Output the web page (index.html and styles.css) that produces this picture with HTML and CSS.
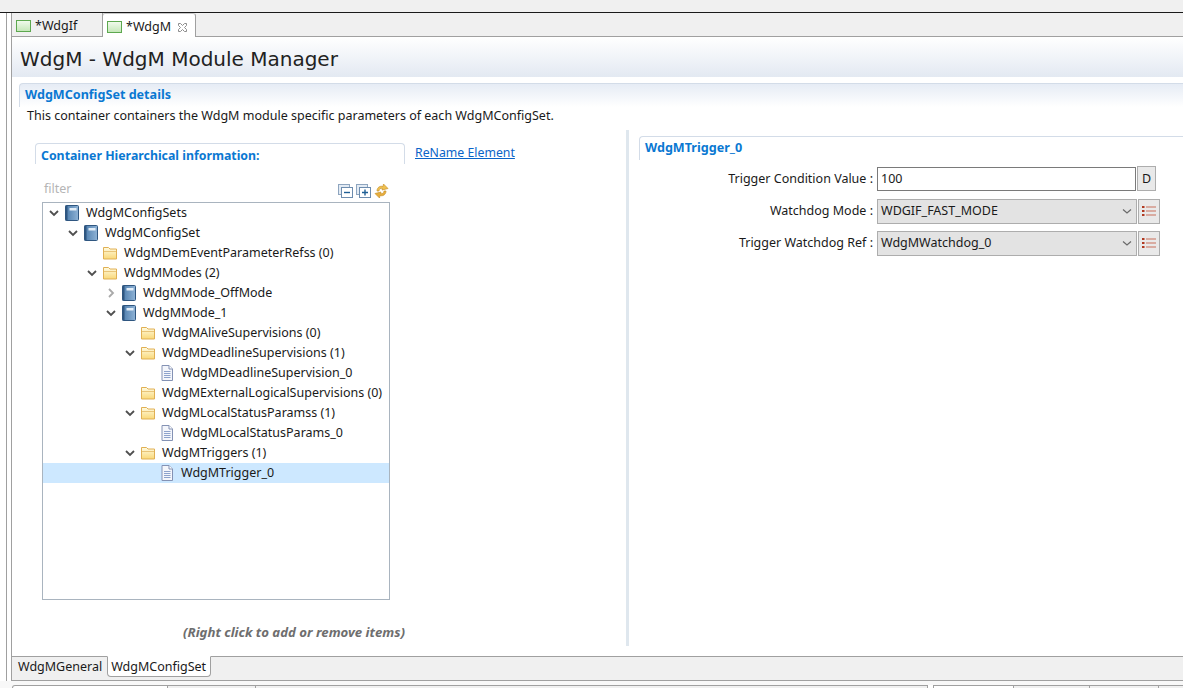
FILE: index.html
```html
<!doctype html>
<html lang="en">
<head>
    <meta charset="UTF-8">
    <title>WdgM - WdgM Module Manager</title>
    <link rel="stylesheet" href="styles.css">
</head>
<body>
<svg class="defs" width="0" height="0">
    <defs>
        <linearGradient id="bookFill" x1="0" y1="0" x2="1" y2="0">
            <stop offset="0" stop-color="#4d7dad"/>
            <stop offset="1" stop-color="#8fb3d6"/>
        </linearGradient>
        <linearGradient id="folderFill" x1="0" y1="0" x2="0" y2="1">
            <stop offset="0" stop-color="#fffbe2"/>
            <stop offset="1" stop-color="#f9d878"/>
        </linearGradient>
        <symbol id="book" viewBox="0 0 16 16">
            <rect x="1.500" y="0.500" width="13" height="15" rx="1" fill="url(#bookFill)" stroke="#2f5680"/>
            <rect x="1.500" y="0.500" width="2" height="15" fill="#2f5680"/>
            <rect x="5.500" y="3" width="7" height="2.500" fill="#e3eef8"/>
        </symbol>
        <symbol id="folder" viewBox="0 0 16 16">
            <path d="M1.500 2.500h5l1.500 1.500h6.500v10h-13z" fill="url(#folderFill)" stroke="#e0b054"/>
            <path d="M2 6.500h12" stroke="#e8c478"/>
        </symbol>
        <symbol id="page" viewBox="0 0 16 16">
            <path d="M3 .5h7l3.500 3.500v11.500h-10.500z" fill="#f4f6fb" stroke="#8492b4"/>
            <path d="M10 .5v3.500h3.500" fill="#fff" stroke="#8492b4"/>
            <path d="M5 6.500h6.500M5 8.500h6.500M5 10.500h6.500M5 12.500h6.500" stroke="#8ea3cc"/>
        </symbol>
        <symbol id="down" viewBox="0 0 12 12">
            <path d="M2 4l4 4 4-4" fill="none" stroke="#4f4f4f" stroke-width="1.800"/>
        </symbol>
        <symbol id="thin-down" viewBox="0 0 12 12">
            <path d="M2 4.500l4 3.500 4-3.500" fill="none" stroke="#6a6a6a" stroke-width="1.200"/>
        </symbol>
        <symbol id="right" viewBox="0 0 12 12">
            <path d="M4 2l4 4-4 4" fill="none" stroke="#a9a9a9" stroke-width="1.800"/>
        </symbol>
        <symbol id="list" viewBox="0 0 14 12">
            <path d="M4 2h10M4 6h10M4 10h10" stroke="#c9705c" stroke-width="1.200"/>
            <path d="M0 2h2.500M0 6h2.500M0 10h2.500" stroke="#b13a22" stroke-width="1.800"/>
        </symbol>
    </defs>
</svg>

<div class="top-strip"></div>
<div class="workspace">
    <div class="side-gutter"></div>
    <div class="editor">
        <div class="editor-tabs">
            <div class="editor-tab">
                <span class="tab-icon"></span><span>*WdgIf</span>
            </div>
            <div class="editor-tab active">
                <span class="tab-icon"></span><span>*WdgM</span>
                <svg class="tab-close" width="11" height="11" viewBox="0 0 11 11">
                    <path d="M1.500 1.500h2l2 2 2-2h2v2l-2 2 2 2v2h-2l-2-2-2 2h-2v-2l2-2-2-2z" fill="#fff" stroke="#8d8d8d"/>
                </svg>
            </div>
        </div>
        <div class="form-body">
            <div class="form-title">WdgM - WdgM Module Manager</div>
            <div class="details">
                <div class="section-head details-head">WdgMConfigSet details</div>
                <div class="details-desc">This container containers the WdgM module specific parameters of each WdgMConfigSet.</div>
                <div class="panes">
                    <div class="pane-left">
                        <div class="tree-top">
                            <div class="tree-column">
                                <div class="section-head tree-head">Container Hierarchical information:</div>
                                <div class="filter-row">
                                    <span class="filter">filter</span>
                                    <span class="tool-icons">
                                        <svg width="16" height="15" viewBox="0 0 16 15">
                                            <rect x=".5" y=".5" width="11" height="10" fill="#e3ebf4" stroke="#8ea5bf"/>
                                            <rect x="3.500" y="3.500" width="11" height="10" fill="#fff" stroke="#6d8cae"/>
                                            <path d="M6 8.500h6" stroke="#1f5f95" stroke-width="1.400"/>
                                        </svg>
                                        <svg width="16" height="15" viewBox="0 0 16 15">
                                            <rect x=".5" y=".5" width="11" height="10" fill="#e3ebf4" stroke="#8ea5bf"/>
                                            <rect x="3.500" y="3.500" width="11" height="10" fill="#fff" stroke="#6d8cae"/>
                                            <path d="M6 8.500h6M9 5.500v6" stroke="#1f5f95" stroke-width="1.400"/>
                                        </svg>
                                        <svg width="15" height="16" viewBox="0 0 15 16">
                                            <path d="M3 8C3 4.500 6 2.500 9 3.500L9.500 1 14 5.500 8 7l.5-1.500C6.500 5 5 6 5 8z" fill="#f0c14f" stroke="#c8922c" stroke-width=".7"/>
                                            <path d="M12 8c0 3.500-3 5.500-6 4.500L5.500 15 1 10.500 7 9l-.5 1.500c2 .5 3.500-.5 3.500-2.500z" fill="#e8ae3c" stroke="#c8922c" stroke-width=".7"/>
                                        </svg>
                                    </span>
                                </div>
                                <div class="tree">
                                    <div class="tree-row level-0"><svg class="arrow"><use href="#down"/></svg><svg class="node"><use href="#book"/></svg><span>WdgMConfigSets</span></div>
                                    <div class="tree-row level-1"><svg class="arrow"><use href="#down"/></svg><svg class="node"><use href="#book"/></svg><span>WdgMConfigSet</span></div>
                                    <div class="tree-row level-2"><span class="arrow"></span><svg class="node"><use href="#folder"/></svg><span>WdgMDemEventParameterRefss (0)</span></div>
                                    <div class="tree-row level-2"><svg class="arrow"><use href="#down"/></svg><svg class="node"><use href="#folder"/></svg><span>WdgMModes (2)</span></div>
                                    <div class="tree-row level-3"><svg class="arrow"><use href="#right"/></svg><svg class="node"><use href="#book"/></svg><span>WdgMMode_OffMode</span></div>
                                    <div class="tree-row level-3"><svg class="arrow"><use href="#down"/></svg><svg class="node"><use href="#book"/></svg><span>WdgMMode_1</span></div>
                                    <div class="tree-row level-4"><span class="arrow"></span><svg class="node"><use href="#folder"/></svg><span>WdgMAliveSupervisions (0)</span></div>
                                    <div class="tree-row level-4"><svg class="arrow"><use href="#down"/></svg><svg class="node"><use href="#folder"/></svg><span>WdgMDeadlineSupervisions (1)</span></div>
                                    <div class="tree-row level-5"><span class="arrow"></span><svg class="node"><use href="#page"/></svg><span>WdgMDeadlineSupervision_0</span></div>
                                    <div class="tree-row level-4"><span class="arrow"></span><svg class="node"><use href="#folder"/></svg><span>WdgMExternalLogicalSupervisions (0)</span></div>
                                    <div class="tree-row level-4"><svg class="arrow"><use href="#down"/></svg><svg class="node"><use href="#folder"/></svg><span>WdgMLocalStatusParamss (1)</span></div>
                                    <div class="tree-row level-5"><span class="arrow"></span><svg class="node"><use href="#page"/></svg><span>WdgMLocalStatusParams_0</span></div>
                                    <div class="tree-row level-4"><svg class="arrow"><use href="#down"/></svg><svg class="node"><use href="#folder"/></svg><span>WdgMTriggers (1)</span></div>
                                    <div class="tree-row level-5 selected"><span class="arrow"></span><svg class="node"><use href="#page"/></svg><span>WdgMTrigger_0</span></div>
                                </div>
                                <div class="tree-hint">(Right click to add or remove items)</div>
                            </div>
                            <a class="rename" href="#">ReName Element</a>
                        </div>
                    </div>
                    <div class="sash"></div>
                    <div class="pane-right">
                        <div class="section-head trigger-head">WdgMTrigger_0</div>
                        <div class="fields">
                            <label class="field-label">Trigger Condition Value :</label>
                            <div class="text-box">100</div>
                            <div class="side-btn d-btn">D</div>

                            <label class="field-label">Watchdog Mode :</label>
                            <div class="combo"><span>WDGIF_FAST_MODE</span><svg class="combo-arrow"><use href="#thin-down"/></svg></div>
                            <div class="side-btn"><svg width="14" height="12"><use href="#list"/></svg></div>

                            <label class="field-label">Trigger Watchdog Ref :</label>
                            <div class="combo"><span>WdgMWatchdog_0</span><svg class="combo-arrow"><use href="#thin-down"/></svg></div>
                            <div class="side-btn"><svg width="14" height="12"><use href="#list"/></svg></div>
                        </div>
                    </div>
                </div>
            </div>
        </div>
        <div class="page-tabs">
            <div class="page-tab">WdgMGeneral</div>
            <div class="page-tab active">WdgMConfigSet</div>
        </div>
    </div>
</div>
<div class="bottom-strip">
    <div class="stub stub-a"></div>
    <div class="stub stub-b"></div>
    <div class="stub stub-c"></div>
    <div class="stub stub-d"></div>
    <div class="stub stub-e"></div>
    <div class="stub stub-f"></div>
    <div class="stub stub-g"></div>
    <div class="stub stub-h"></div>
</div>
</body>
</html>
```

FILE: styles.css
```css
* { margin: 0; padding: 0; box-sizing: border-box; }
html, body { width: 100%; height: 100%; overflow: hidden; }
body { background: #fff; color: #1a1a1a; font: 12.5px/20px "Noto Sans", "Noto Sans CJK SC", sans-serif; display: flex; flex-direction: column; }
.defs { position: absolute; }

.top-strip { flex: none; height: 13px; background: #f0f0f0; border-bottom: 1px solid #1a1a1a; }
.workspace { flex: none; height: 668px; display: flex; background: #fff; }
.side-gutter { width: 7px; background: #fff; border-right: 1px solid #a0a0a0; margin-right: 4px; }
.editor { flex: 1; display: flex; flex-direction: column; border-left: 1px solid #a0a0a0; border-bottom: 1px solid #a0a0a0; min-width: 0; }

/* editor tabs */
.editor-tabs { height: 24px; display: flex; background: #f0f0f0; border-bottom: 1px solid #a0a0a0; }
.editor-tab { width: 91px; height: 23px; display: flex; align-items: center; padding: 3px 0 0 4px; gap: 4px; border-right: 1px solid #a0a0a0; }
.editor-tab.active { width: 94px; height: 24px; background: #fff; border-left: 1px solid #a0a0a0; border-top: 1px solid #c8c8c8; border-radius: 3px 3px 0 0; margin-left: -1px; }
.tab-icon { width: 15px; height: 12px; border: 1px solid #5da84f; background: linear-gradient(#f0faec, #c6e8ba); }
.tab-close { margin-left: 2px; }

/* form */
.form-body { flex: 1; display: flex; flex-direction: column; min-height: 0; }
.form-title { height: 40px; padding: 3px 0 0 8px; font: 20px/38px "DejaVu Sans", sans-serif; color: #222; background: linear-gradient(#fff, #e3e9f2); }
.section-head { color: #0a78d2; font-weight: 700; font-size: 12.6px; }
.details { flex: 1; display: flex; flex-direction: column; padding: 6px 0 0 7px; min-height: 0; }
.details-head { height: 24px; line-height: 22px; padding-left: 5px; border: 1px solid #d3dce8; border-width: 1px 0 0 1px; border-radius: 4px 0 0 0; background: linear-gradient(#e6ecf5, #fff); }
.details-desc { height: 22px; padding-left: 8px; line-height: 18px; font-size: 12.53px; }
.panes { flex: 1; display: flex; min-height: 0; margin-left: -7px; padding-top: 1px; }
.pane-left { width: 614px; }
.sash { width: 3px; background: #dfe7ee; margin: 0 0 10px; }

/* tree */
.tree-top { display: flex; padding: 13px 0 0 17px; }
.tree-column { width: 376px; }
.tree-head { height: 21px; margin-left: 6px; line-height: 23px; padding-left: 5px; border: 1px solid #d3dce8; border-bottom: 0; border-radius: 4px 4px 0 0; font-size: 12.34px; }
.filter-row { height: 38px; display: flex; align-items: flex-end; justify-content: space-between; padding: 0 16px 3px 15px; }
.filter { color: #b5b5b5; line-height: 20px; }
.tool-icons { display: flex; gap: 2px; align-items: center; }
.tree { width: 348px; height: 398px; margin-left: 13px; border: 1px solid #a9b4bf; background: #fff; }
.tree-row { height: 20px; display: flex; align-items: center; white-space: nowrap; }
.tree-row.selected { background: #cde8ff; }
.level-1 { padding-left: 19px; }
.level-2 { padding-left: 38px; }
.level-3 { padding-left: 57px; }
.level-4 { padding-left: 76px; }
.level-5 { padding-left: 95px; }
.arrow { width: 12px; height: 12px; margin: 0 4px 0 5px; flex: none; }
.node { width: 16px; height: 16px; margin-right: 6px; flex: none; }
.tree-hint { margin: 22px 0 0 154px; color: #6e6e6e; font-weight: 700; font-style: italic; white-space: nowrap; font-size: 13.2px; }
.rename { margin: 0 0 0 10px; color: #0a64c8; line-height: 20px; font-size: 12.3px; }

/* right side */
.pane-right { flex: 1; padding: 6px 0 0 10px; }
.trigger-head { height: 24px; padding-left: 5px; line-height: 21px; border-top: 1px solid #d3dce8; border-left: 1px solid #d3dce8; border-radius: 4px 0 0 0; }
.fields { display: grid; grid-template-columns: 238px 260px auto; grid-template-rows: 33px 32px 32px; align-items: center; padding-top: 2px; }
.field-label { text-align: right; padding-right: 4px; white-space: nowrap; }
.text-box { width: 259px; height: 24px; line-height: 22px; border: 1px solid #7a7a7a; padding-left: 3px; background: #fff; }
.combo { height: 25px; display: flex; align-items: center; justify-content: space-between; padding: 0 3px; background: #e3e3e3; border: 1px solid #adadad; }
.combo-arrow { width: 12px; height: 12px; }
.side-btn { width: 22px; height: 25px; margin-left: 1px; display: flex; align-items: center; justify-content: center; background: #e9e9e9; border: 1px solid #adadad; }
.d-btn { width: 19px; margin-left: 0; }

/* page tabs */
.page-tabs { height: 24px; margin-top: auto; display: flex; padding-left: 2px; background: #f0f0f0; border-top: 1px solid #a0a0a0; }
.page-tab { height: 20px; padding: 0 5px 0 4px; line-height: 20px; }
.page-tab.active { height: 21px; margin-top: -1px; background: #fff; border: 1px solid #a0a0a0; border-top-color: #fff; border-radius: 0 0 4px 4px; padding: 0 4px 0 3px; width: 104px; }

/* strip under the editor */
.bottom-strip { flex: 1; min-height: 0; overflow: hidden; display: flex; padding-top: 4px; background: #f8f8f8; }
.stub { flex: none; height: 5px; border: 1px solid #a0a0a0; border-width: 1px 1px 0 0; background: #f0f0f0; }
.stub-a { width: 156px; margin-left: 12px; border-left-width: 1px; border-radius: 3px 0 0 0; background: #fff; }
.stub-b { width: 88px; }
.stub-c { width: 672px; }
.stub-d { width: 6px; background: #fff; border-top: 0; }
.stub-e { width: 80px; background: #fff; }
.stub-f { width: 76px; }
.stub-g { width: 69px; }
.stub-h { flex: 1; border-right: 0; }
```
